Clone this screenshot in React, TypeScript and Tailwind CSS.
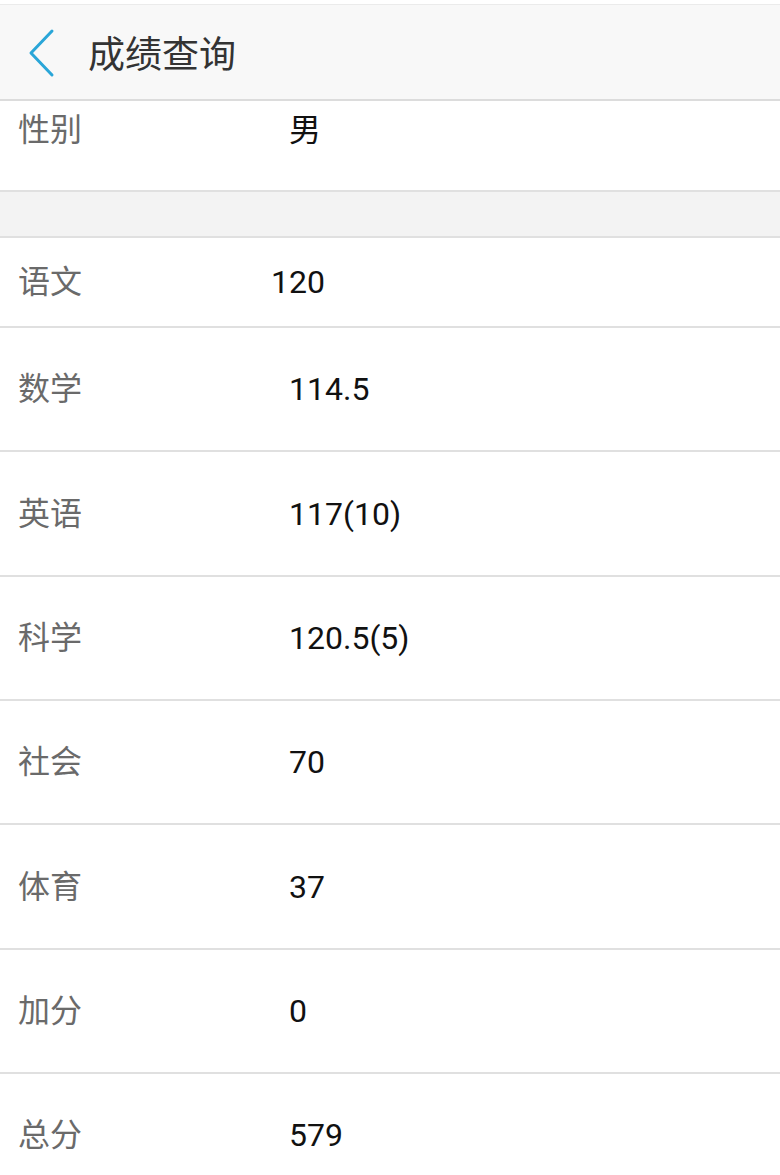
const cjk = "font-['Roboto','Noto_Sans_CJK_SC',sans-serif]";

type Score = { name: string; value: string; h: string; shift?: boolean };

const scores: Score[] = [
  { name: "语文", value: "120", h: "h-[90px]" },
  { name: "数学", value: "114.5", h: "h-[124px]", shift: true },
  { name: "英语", value: "117(10)", h: "h-[125px]", shift: true },
  { name: "科学", value: "120.5(5)", h: "h-[124px]", shift: true },
  { name: "社会", value: "70", h: "h-[124px]", shift: true },
  { name: "体育", value: "37", h: "h-[125px]", shift: true },
  { name: "加分", value: "0", h: "h-[124px]", shift: true },
  { name: "总分", value: "579", h: "h-[124px]", shift: true },
];

function BackIcon() {
  return (
    <svg width="32" height="50" viewBox="0 0 32 50" fill="none">
      <path d="M24 3 L3 25 L24 47" stroke="#2aa6d8" strokeWidth="3" strokeLinecap="round" strokeLinejoin="round" />
    </svg>
  );
}

export default function App() {
  return (
    <div className={`w-[780px] h-[1175px] overflow-hidden bg-white ${cjk}`}>
      {/* 顶部标题栏 */}
      <div className="h-[4px] bg-white"></div>
      <header className="h-[97px] bg-[#f8f8f8] border-t border-t-[#ebebeb] border-b-2 border-b-[#dcdcdc] flex items-center">
        <div className="ml-[28px] mt-[2px] flex items-center">
          <BackIcon />
        </div>
        <h1 className="ml-[28px] mt-[6px] text-[37px] leading-none text-[#333]">成绩查询</h1>
      </header>

      {/* 基本信息 */}
      <div className="h-[91px] border-b-2 border-[#e0e0e0] flex items-start pt-[9px] pl-[18px]">
        <span className="w-[271px] text-[32px] leading-[40px] text-[#6a6a6a]">性别</span>
        <span className="text-[32px] leading-[40px] text-[#111]">男</span>
      </div>
      <div className="h-[46px] bg-[#f3f3f3] border-b-2 border-[#e0e0e0]"></div>

      {/* 各科成绩 */}
      {scores.map((s) => (
        <div key={s.name} className={`${s.h} border-b-2 border-[#e0e0e0] flex items-center pl-[18px]`}>
          <span className="w-[253px] text-[32px] leading-[40px] text-[#6a6a6a]">{s.name}</span>
          <span className={`${s.shift ? "pl-[18px]" : ""} text-[32px] leading-[40px] text-[#111]`}>{s.value}</span>
        </div>
      ))}
    </div>
  );
}
